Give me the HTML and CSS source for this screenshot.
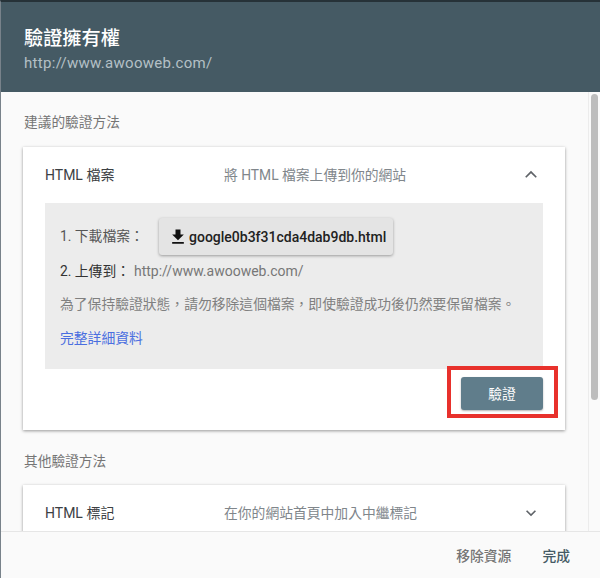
FILE: index.html
```html
<!DOCTYPE html>
<html lang="zh-Hant">
<head>
    <meta charset="UTF-8">
    <title>驗證擁有權</title>
    <link rel="stylesheet" href="styles.css">
</head>
<body>
    <div class="dialog">
        <div class="header">
            <h1>驗證擁有權</h1>
            <p>http://www.awooweb.com/</p>
        </div>

        <div class="body">
            <div class="content">
                <div class="section-title">建議的驗證方法</div>

                <div class="card">
                    <div class="card-head">
                        <span class="card-name">HTML 檔案</span>
                        <span class="card-desc">將 HTML 檔案上傳到你的網站</span>
                        <svg class="chevron" viewBox="0 0 24 24"><path d="M6.4 15.4 12 9.8l5.6 5.6 1.4-1.4-7-7-7 7z"/></svg>
                    </div>
                    <div class="panel">
                        <div class="step step-download">
                            <span>1. 下載檔案：</span>
                            <div class="download-btn">
                                <svg viewBox="0 0 24 24"><path d="M19 9h-4V3H9v6H5l7 7 7-7zM5 18v2h14v-2H5z"/></svg>
                                google0b3f31cda4dab9db.html
                            </div>
                        </div>
                        <div class="step step-upload">
                            <span class="upload-label">2. 上傳到：</span>
                            <span class="upload-url">http://www.awooweb.com/</span>
                        </div>
                        <p class="note">為了保持驗證狀態，請勿移除這個檔案，即使驗證成功後仍然要保留檔案。</p>
                        <a class="details" href="#">完整詳細資料</a>
                    </div>
                    <div class="card-actions">
                        <div class="highlight">
                            <button class="verify-btn">驗證</button>
                        </div>
                    </div>
                </div>

                <div class="section-title section-other">其他驗證方法</div>

                <div class="card">
                    <div class="card-head">
                        <span class="card-name">HTML 標記</span>
                        <span class="card-desc">在你的網站首頁中加入中繼標記</span>
                        <svg class="chevron" viewBox="0 0 24 24"><path d="M7.4 8.6 12 13.2l4.6-4.6L18 10l-6 6-6-6z"/></svg>
                    </div>
                </div>
            </div>
            <div class="scrollbar"><div class="thumb"></div></div>
        </div>

        <div class="footer">
            <span class="footer-link">移除資源</span>
            <span class="footer-link footer-done">完成</span>
        </div>
    </div>
</body>
</html>
```

FILE: styles.css
```css
* {
    margin: 0;
    padding: 0;
    box-sizing: border-box;
}

html, body {
    width: 600px;
    height: 578px;
    overflow: hidden;
}

body {
    font-family: Roboto, "Noto Sans CJK TC", sans-serif;
    background: #fafafa;
}

.dialog {
    height: 578px;
    display: flex;
    flex-direction: column;
    border-top: 2px solid #263238;
    border-left: 1px solid #78828a;
}

.header {
    height: 90px;
    flex-shrink: 0;
    background: #455a64;
    padding: 23px 0 0 23px;
}

.header h1 {
    font-size: 19.2px;
    line-height: 28px;
    font-weight: 500;
    color: #fff;
}

.header p {
    font-size: 15px;
    line-height: 20px;
    letter-spacing: 0.3px;
    color: #b4c0c6;
}

.body {
    flex: 1;
    min-height: 0;
    display: flex;
    overflow: hidden;
}

.content {
    width: 588px;
    flex-shrink: 0;
    padding: 21px 23px 0 22px;
    border-right: 1px solid #ececec;
}

.section-title {
    font-size: 13.7px;
    line-height: 18px;
    padding-left: 1px;
    color: #757575;
    margin-bottom: 16px;
}

.section-other {
    margin-top: 22px;
    margin-bottom: 15px;
}

.card {
    background: #fff;
    box-shadow: 0 1px 3px rgba(0,0,0,0.4);
}

.card-head {
    height: 56px;
    display: flex;
    align-items: center;
    padding: 0 24px 2px 22px;
    font-size: 14px;
}

.card-name {
    width: 179px;
    color: #3c4043;
}

.card-desc {
    flex: 1;
    font-size: 13.8px;
    color: #80868b;
}

.chevron {
    width: 20px;
    height: 20px;
    margin-top: 2px;
    fill: #5f6368;
}

.panel {
    margin: 0 22px;
    height: 166px;
    background: #ececec;
    padding: 15px 15px 0;
    font-size: 13.8px;
    color: #555;
}

.step-download {
    display: flex;
    align-items: center;
}

.step-download span {
    width: 99px;
    padding-bottom: 3px;
}

.download-btn {
    width: 234px;
    height: 37px;
    display: flex;
    align-items: center;
    padding-left: 9px;
    background: #e4e4e4;
    border-radius: 3px;
    box-shadow: 0 1px 3px rgba(0,0,0,0.35);
    font-size: 14px;
    font-weight: 500;
    color: #212121;
}

.download-btn svg {
    width: 20px;
    height: 20px;
    margin-right: 1px;
    fill: #111;
}

.step-upload {
    display: flex;
    margin-top: 7px;
    line-height: 18px;
}

.upload-label {
    width: 74px;
    color: #333;
}

.upload-url {
    font-size: 14px;
    color: #777;
}

.note {
    margin-top: 15px;
    line-height: 18px;
    color: #808080;
}

.details {
    display: block;
    margin-top: 16px;
    line-height: 18px;
    color: #4a6ee0;
    text-decoration: none;
}

.card-actions {
    height: 64px;
    display: flex;
    justify-content: flex-end;
    align-items: flex-start;
    padding-right: 7px;
    margin-top: -3px;
}

.highlight {
    border: 4px solid #e8312c;
    padding: 7px 11px 4px 10px;
}

.verify-btn {
    display: block;
    width: 82px;
    height: 33px;
    padding-bottom: 2px;
    border: none;
    border-radius: 3px;
    background: #607d8b;
    box-shadow: 0 1px 2px rgba(0,0,0,0.3);
    color: #fff;
    font-family: inherit;
    font-size: 13.7px;
}

.scrollbar {
    flex: 1;
    padding: 2px 2px 0;
}

.thumb {
    width: 7px;
    height: 306px;
    background: #bdbdbd;
    border-radius: 4px;
}

.footer {
    height: 47px;
    flex-shrink: 0;
    display: flex;
    justify-content: flex-end;
    align-items: center;
    gap: 31px;
    padding-right: 30px;
    background: #fafafa;
    border-top: 1px solid #e6e6e6;
    font-size: 13.8px;
    font-weight: 500;
    color: #757575;
}

.footer-done {
    color: #455a64;
}
```
